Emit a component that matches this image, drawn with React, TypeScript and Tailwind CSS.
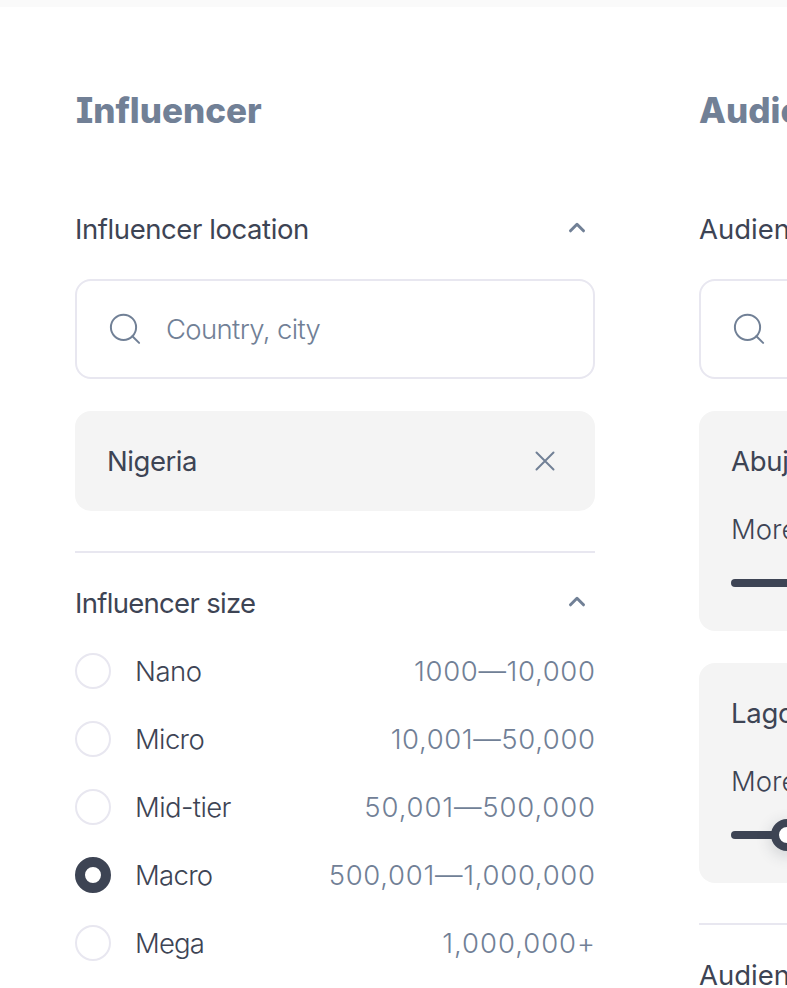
import type { ReactNode } from "react";

const sizes = [
  { name: "Nano", nameStyle: "tracking-[-0.5px]", range: "1000—10,000", rangeStyle: "tracking-[0.65px] -mr-[0.65px]" },
  { name: "Micro", nameStyle: "tracking-[-0.65px]", range: "10,001—50,000", rangeStyle: "tracking-[0.6px] -mr-[0.6px]" },
  { name: "Mid-tier", nameStyle: "tracking-[-0.6px]", range: "50,001—500,000", rangeStyle: "tracking-[0.85px] -mr-[0.85px]" },
  { name: "Macro", nameStyle: "tracking-[-0.7px]", range: "500,001—1,000,000", rangeStyle: "tracking-[0.7px] -mr-[0.7px]", selected: true },
  { name: "Mega", nameStyle: "tracking-[-0.8px]", range: "1,000,000+", rangeStyle: "tracking-[0.95px] -mr-[0.95px]" },
];

function Chevron() {
  return (
    <svg className="mr-2 h-5 w-5" viewBox="0 0 20 20" fill="none" stroke="#718096" strokeWidth="3" strokeLinecap="round" strokeLinejoin="round">
      <path d="M3.5 11.8 10 5.3l6.500 6.500" />
    </svg>
  );
}

function SectionTitle({ children, chevron }: { children: ReactNode; chevron?: boolean }) {
  return (
    <div className="flex h-10 items-center justify-between whitespace-nowrap text-[27.500px] leading-10 text-[#3d4454]">
      <h3>{children}</h3>
      {chevron && <Chevron />}
    </div>
  );
}

function SearchBox({ placeholder }: { placeholder: string }) {
  return (
    <div className="mt-[30px] flex h-[100px] items-center gap-[25px] rounded-2xl border-2 border-[#e8e7f0] px-8 text-[27.500px] font-light text-[#718096]">
      <svg className="h-8 w-8 shrink-0" viewBox="0 0 32 32" fill="none" stroke="#718096" strokeWidth="2" strokeLinecap="round">
        <circle cx="14.500" cy="14.300" r="12.600" />
        <path d="m23.400 23.200 6.700 6.700" />
      </svg>
      <span className="pt-0.5 tracking-[-0.65px] whitespace-nowrap">{placeholder}</span>
    </div>
  );
}

function Heading({ children }: { children: ReactNode }) {
  return (
    <h2 className="h-12 whitespace-nowrap text-[35px] leading-[48px] font-extrabold text-[#718096] [font-feature-settings:'cv08']">
      {children}
    </h2>
  );
}

function CityCard({ city, spacing, knob }: { city: string; spacing: string; knob?: boolean }) {
  return (
    <div className={`${spacing} h-[220px] rounded-2xl bg-[#f4f4f4] px-8 pt-[30px] text-[27.500px] leading-10 text-[#3d4454]`}>
      <div className="tracking-[-0.3px]">{city}</div>
      <div className="mt-7 whitespace-nowrap font-light">More than</div>
      <div className="relative mt-[30px] h-2 rounded-full bg-[#3d4454]">
        {knob && (
          <span className="absolute -top-3 left-10 h-8 w-8 rounded-full border-8 border-[#3d4454] bg-white shadow-[0_4px_16px_rgba(45,55,72,0.2)]" />
        )}
      </div>
    </div>
  );
}

export default function App() {
  return (
    <div className="h-[988px] w-[787px] overflow-hidden bg-white font-['Inter',sans-serif]">
      <div className="h-[7px] bg-[#fafafa]" />
      <div className="flex gap-[104px] pt-[79px] pl-[75px]">
        <section className="w-[520px] shrink-0">
          <Heading>
            <span className="ml-px">Influencer</span>
          </Heading>
          <div className="h-[75px]" />
          <SectionTitle chevron>
            <span className="tracking-[-0.42px]">Influencer location</span>
          </SectionTitle>
          <SearchBox placeholder="Country, city" />
          <div className="mt-8 flex h-[100px] items-center justify-between rounded-2xl bg-[#f4f4f4] pr-10 pl-8 text-[27.500px] text-[#3d4454]">
            <span className="pt-0.5 tracking-[-0.45px]">Nigeria</span>
            <svg className="h-5 w-5" viewBox="0 0 20 20" fill="none" stroke="#718096" strokeWidth="2" strokeLinecap="round">
              <path d="m1.500 1.500 17 17M18.500 1.500l-17 17" />
            </svg>
          </div>
          <hr className="mt-10 mb-[30px] border-t-2 border-[#e8e7f0]" />
          <SectionTitle chevron>
            <span className="tracking-[-0.7px]">Influencer size</span>
          </SectionTitle>
          <div className="mt-[30px] flex flex-col gap-8">
            {sizes.map((s) => (
              <label key={s.name} className="flex h-9 items-center text-[27.500px] leading-9 font-light">
                <span
                  className={
                    s.selected
                      ? "h-9 w-9 rounded-full border-[10px] border-[#3d4454]"
                      : "h-9 w-9 rounded-full border-2 border-[#e8e7f0]"
                  }
                />
                <span className={`ml-6 text-[#3d4454] ${s.nameStyle}`}>{s.name}</span>
                <span className={`ml-auto text-[#718096] ${s.rangeStyle}`}>{s.range}</span>
              </label>
            ))}
          </div>
        </section>
        <section className="w-[520px] shrink-0">
          <Heading>Audience</Heading>
          <div className="h-[75px]" />
          <SectionTitle>Audience location</SectionTitle>
          <SearchBox placeholder="Country, city" />
          <CityCard city="Abuja" spacing="mt-8" />
          <CityCard city="Lagos" spacing="mt-8" knob />
          <hr className="mt-10 mb-[30px] border-t-2 border-[#e8e7f0]" />
          <SectionTitle>Audience age</SectionTitle>
        </section>
      </div>
    </div>
  );
}
